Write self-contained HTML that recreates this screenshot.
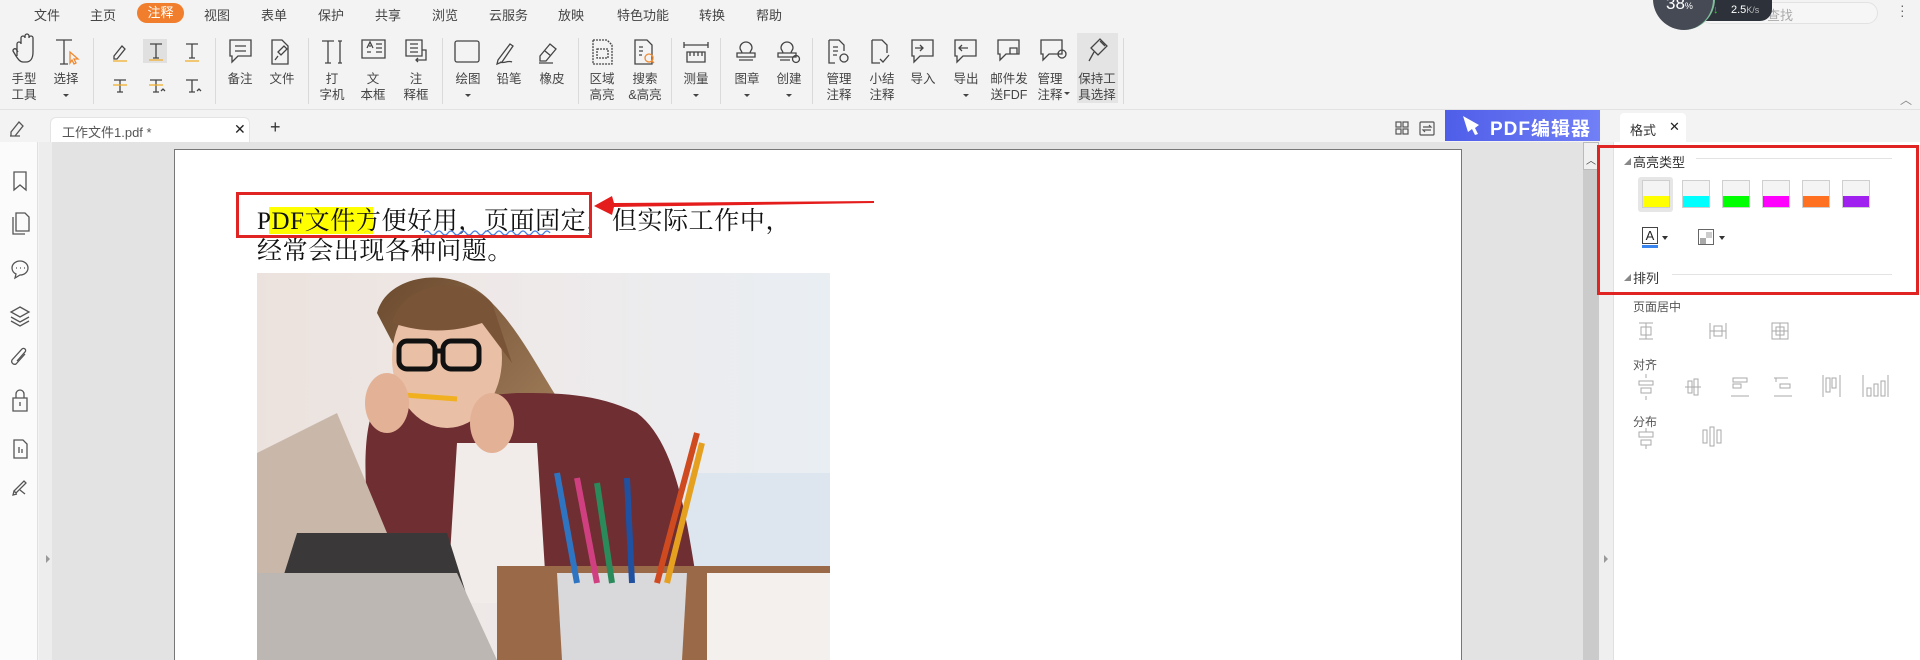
<!DOCTYPE html>
<html><head><meta charset="utf-8"><style>
*{margin:0;padding:0;box-sizing:border-box}
body{width:1920px;height:660px;overflow:hidden;background:#f3f3f3;font-family:"Liberation Sans","Noto Sans CJK SC",sans-serif;color:#333;position:relative}
.a{position:absolute}
.m{position:absolute;top:5px;font-size:13px;color:#444}
.lb{position:absolute;font-size:12.5px;color:#444;text-align:center;width:60px;line-height:16px}
.sw{position:absolute;top:180px;width:28px;height:28px;border:1px solid #cfcfcf;background:#f4f4f4}
.sw i{position:absolute;left:0;right:0;bottom:0;height:11px}
</style></head><body>
<div class="m" style="left:34px">文件</div>
<div class="m" style="left:90px">主页</div>
<div class="a" style="left:137px;top:3px;width:47px;height:20px;border-radius:10px;background:#f07e2c;color:#fff;font-size:13px;text-align:center;line-height:20px">注释</div>
<div class="m" style="left:204px">视图</div>
<div class="m" style="left:261px">表单</div>
<div class="m" style="left:318px">保护</div>
<div class="m" style="left:375px">共享</div>
<div class="m" style="left:432px">浏览</div>
<div class="m" style="left:489px">云服务</div>
<div class="m" style="left:558px">放映</div>
<div class="m" style="left:617px">特色功能</div>
<div class="m" style="left:699px">转换</div>
<div class="m" style="left:756px">帮助</div>
<div class="a" style="left:1700px;top:2px;width:178px;height:22px;border:1px solid #e2e2e2;border-radius:11px;background:#f6f6f6"></div>
<div class="a" style="left:1767px;top:5px;font-size:13px;color:#aaa">查找</div>
<div class="a" style="left:1680px;top:0;width:92px;height:21px;background:#2d3139;border-radius:0 0 12px 0"></div>
<div class="a" style="left:1713px;top:4px;font-size:11px;color:#3c3">↓</div>
<div class="a" style="left:1731px;top:4px;font-size:11px;color:#fff">2.5<span style="font-size:9px;color:#bbb">K/s</span></div>
<div class="a" style="left:1653px;top:-32px;width:62px;height:62px;border-radius:50%;background:#464a55;border-right:2px solid #7fbf9a"></div>
<div class="a" style="left:1666px;top:-6px;font-size:17px;color:#fff">38<span style="font-size:9px">%</span></div>
<div class="a" style="left:1900px;top:3px;font-size:14px;color:#666;line-height:5px">·<br>·<br>·</div>
<div class="a" style="left:1900px;top:91px;font-size:12px;color:#888">︿</div>
<svg class="a" style="left:0;top:0" width="1130" height="110" fill="none" stroke="#444" stroke-width="1.3">
<path d="M17 56v-12a2 2 0 014 0v-6a2 2 0 014 0v-2a2 2 0 014 0v2a2 2 0 014 0v14c0 7-3 10-7 10h-3c-3 0-5-3-7-6l-3-5a2 2 0 013-2l2 3"/>
<path d="M56 40h16M64 40v24M60 64h8"/><path d="M70 52l8 7-4 0 2 4-2 1-2-4-2 3z" stroke="#f08a30"/>
<path d="M114 56l8-10 3 3-8 10h-3z" /><path d="M113 61h14" stroke="#f0b030"/>
<rect x="143" y="39" width="24" height="24" fill="#e0e0e0" stroke="none"/><path d="M150 44h12M156 44v14M153 58h6"/><path d="M149 60h14" stroke="#f0b030"/>
<path d="M186 44h12M192 44v14M189 58h6"/><path d="M185 61h14" stroke="#f0b030"/>
<path d="M114 80h12M120 80v12M117 92h6"/><path d="M113 85h14" stroke="#f0b030"/>
<path d="M150 80h12M156 80v12M153 92h6M161 91l2-2 2 2"/><path d="M149 85h14" stroke="#f0b030"/>
<path d="M186 80h12M192 80v12M189 92h6M197 91l2-2 2 2"/>
<path d="M230 40h21v16h-13l-6 6v-6h-2zM235 46h11M235 51h11"/>
<path d="M272 40h10l6 6v18h-16zM278 52l6-6 3 3-6 6zM278 56l-3 4"/>
<path d="M322 41h12M328 41v22M325 63h6M338 41h4M340 41v22M338 63h4"/>
<path d="M362 40h23v18h-23zM367 48l3-6 3 6M369 46h2M376 44h6M376 48h6M376 52h6M367 52h4"/>
<path d="M406 40h16v16h-16zM410 44h8M410 48h8M410 52h8M422 50h4v10h-10M418 58l-2 2 2 2"/>
<rect x="455" y="41" width="24" height="21" rx="2"/>
<path d="M498 60l12-16 3 2-11 16-5 2zM500 62c4 2 8-2 12 0"/>
<path d="M540 56l10-12 6 5-10 12h-6zM539 63h14M545 51l6 5"/>
<path d="M593 40h14l5 5v19h-19zM597 49h11v9h-11z" stroke-dasharray="2 1"/>
<path d="M635 40h12l5 5v19h-17zM639 47h4M639 51h4M639 55h3"/><circle cx="649" cy="58" r="4" stroke="#f08a30"/><path d="M652 61l2 2" stroke="#f08a30"/>
<path d="M684 42v6M684 45h24M708 42v6M687 52h18v10h-18zM690 52v4M694 52v4M698 52v4M702 52v4"/>
<path d="M740 48a6 6 0 1112 0c0 2-2 3-2 5h-8c0-2-2-3-2-5zM737 53h18v4h-18zM739 60h14"/>
<path d="M781 48a6 6 0 1112 0c0 2-2 3-2 5h-8c0-2-2-3-2-5zM778 53h18v4h-18zM780 60h10"/><circle cx="796" cy="59" r="3.5"/>
<path d="M829 40h10l5 5v6M833 47h5M833 51h5M833 55h4M829 40v23h6"/><circle cx="844" cy="58" r="4"/>
<path d="M872 40h10l5 5v8M872 40v23h8M880 59l3 3 6-7"/>
<path d="M912 40h21v16h-13l-6 6v-6h-2zM915 48h8M920 45l3 3-3 3"/>
<path d="M955 40h21v16h-13l-6 6v-6h-2zM968 48h-9M962 45l-3 3 3 3"/>
<path d="M998 40h21v14h-13l-6 6v-6h-2zM1010 48h7v6h-7z"/>
<path d="M1041 40h21v14h-13l-6 6v-6h-2z"/><circle cx="1062" cy="54" r="4"/>
<rect x="1077" y="33" width="41" height="70" fill="#e4e4e4" stroke="none"/>
<path d="M1091 48l9-9 7 7-9 9zM1094 52l-5 9M1100 41l5 5"/>
<g stroke="#dadada" stroke-width="1"><path d="M93.5 38v66M215.5 38v66M308.5 38v66M442.5 38v66M578.5 38v66M671.5 38v66M720.5 38v66M812.5 38v66M1123.5 38v66"/></g>
<g fill="#444" stroke="none"><path d="M63 94h6l-3 3z"/><path d="M465 94h6l-3 3z"/><path d="M693 94h6l-3 3z"/><path d="M744 94h6l-3 3z"/><path d="M786 94h6l-3 3z"/><path d="M963 94h6l-3 3z"/><path d="M1064 92h6l-3 3z"/></g>
</svg>
<div class="lb" style="left:-6px;top:71px">手型<br>工具</div>
<div class="lb" style="left:36px;top:71px">选择</div>
<div class="lb" style="left:210px;top:71px">备注</div>
<div class="lb" style="left:252px;top:71px">文件</div>
<div class="lb" style="left:302px;top:71px">打<br>字机</div>
<div class="lb" style="left:343px;top:71px">文<br>本框</div>
<div class="lb" style="left:386px;top:71px">注<br>释框</div>
<div class="lb" style="left:438px;top:71px">绘图</div>
<div class="lb" style="left:479px;top:71px">铅笔</div>
<div class="lb" style="left:522px;top:71px">橡皮</div>
<div class="lb" style="left:572px;top:71px">区域<br>高亮</div>
<div class="lb" style="left:615px;top:71px">搜索<br>&amp;高亮</div>
<div class="lb" style="left:666px;top:71px">测量</div>
<div class="lb" style="left:717px;top:71px">图章</div>
<div class="lb" style="left:759px;top:71px">创建</div>
<div class="lb" style="left:809px;top:71px">管理<br>注释</div>
<div class="lb" style="left:852px;top:71px">小结<br>注释</div>
<div class="lb" style="left:893px;top:71px">导入</div>
<div class="lb" style="left:936px;top:71px">导出</div>
<div class="lb" style="left:979px;top:71px">邮件发<br>送FDF</div>
<div class="lb" style="left:1020px;top:71px">管理<br>注释</div>
<div class="lb" style="left:1067px;top:71px">保持工<br>具选择</div>
<div class="a" style="left:0;top:109px;width:1920px;height:1px;background:#e2e2e2"></div>
<svg class="a" style="left:8px;top:119px" width="18" height="18" fill="none" stroke="#555" stroke-width="1.3"><path d="M3 13l8-10 4 4-8 10H3zM2 17h10"/></svg>
<div class="a" style="left:50px;top:117px;width:200px;height:26px;background:#fff;border-radius:6px 6px 0 0;border:1px solid #e4e4e4;border-bottom:none"></div>
<div class="a" style="left:62px;top:122px;font-size:13px;color:#555">工作文件1.pdf *</div>
<div class="a" style="left:234px;top:121px;font-size:14px;color:#222">✕</div>
<div class="a" style="left:270px;top:117px;font-size:18px;color:#333">+</div>
<svg class="a" style="left:1395px;top:120px" width="50" height="18" fill="none" stroke="#555" stroke-width="1.2"><rect x="1" y="2" width="5" height="5"/><rect x="8" y="2" width="5" height="5"/><rect x="1" y="9" width="5" height="5"/><rect x="8" y="9" width="5" height="5"/><rect x="25" y="2" width="14" height="13" rx="1"/><path d="M28 7h8l-2-2M36 10h-8l2 2"/></svg>
<div class="a" style="left:1445px;top:110px;width:155px;height:31px;background:linear-gradient(90deg,#4f5ee8,#7180f6)"></div>
<svg class="a" style="left:1460px;top:113px" width="26" height="26"><path d="M3 3l16 9-4 3 3 6-3 1-3-6-4 3z" fill="#fff"/></svg>
<div class="a" style="left:1490px;top:114px;font-size:19px;color:#fff;letter-spacing:1px;font-weight:bold">PDF编辑器</div>
<div class="a" style="left:1620px;top:113px;width:66px;height:29px;background:#fff;border-radius:4px 4px 0 0"></div>
<div class="a" style="left:1630px;top:120px;font-size:13px;color:#333">格式</div>
<div class="a" style="left:1669px;top:119px;font-size:13px;color:#222">✕</div>
<div class="a" style="left:0;top:142px;width:38px;height:518px;background:#fbfbfb;border-right:1px solid #e0e0e0"></div>
<div class="a" style="left:39px;top:142px;width:13px;height:518px;background:#ededed"></div>
<div class="a" style="left:52px;top:142px;width:1531px;height:518px;background:#e3e3e3"></div>
<svg class="a" style="left:0;top:142px" width="52" height="518" fill="none" stroke="#555" stroke-width="1.3">
<path d="M14 30h12v18l-6-5-6 5z"/>
<path d="M16 71h9l4 4v14h-13zM13 75v17h12"/>
<path d="M12 126a8 7 0 1116 0 8 7 0 01-8 7l-5 3 1-4a7 7 0 01-4-6zM16 126h1M20 126h1M24 126h1"/>
<path d="M20 165l9 5-9 5-9-5zM11 175l9 5 9-5M11 179l9 5 9-5"/>
<path d="M25 212l-9 10a3 3 0 01-4-4l10-11a2 2 0 013 3l-8 9"/>
<path d="M13 256h14v13h-14zM16 256v-4a4 4 0 018 0v4M20 260v4"/>
<path d="M14 298h9l4 4v14h-13zM19 311v-6M22 311v-4"/>
<path d="M14 349l10-10 2 2-10 10zM14 349l-1 4 4-1M20 348l5 4"/>
<path d="M46 413l4 4-4 4z" fill="#999" stroke="none"/>
</svg>
<div class="a" style="left:174px;top:149px;width:1288px;height:511px;background:#fff;border:1px solid #777;border-bottom:none"></div>
<div class="a" style="left:269px;top:207px;width:104px;height:27px;background:#ffff00"></div>
<div class="a" style="left:257px;top:207px;font-family:'Liberation Serif','Noto Serif CJK SC',serif;font-size:25px;line-height:30px;color:#111;letter-spacing:0.6px;white-space:nowrap">PDF文件方便好用，页面固定，但实际工作中，<br>经常会出现各种问题。</div>
<svg class="a" style="left:424px;top:229px" width="130" height="8"><path d="M0 4q3-4 6 0t6 0 6 0 6 0 6 0 6 0 6 0 6 0 6 0 6 0 6 0 6 0 6 0 6 0 6 0 6 0 6 0 6 0 6 0 6 0 6 0" fill="none" stroke="#4a7fe0" stroke-width="1.3"/></svg>
<div class="a" style="left:236px;top:192px;width:356px;height:46px;border:3px solid #e02424"></div>
<svg class="a" style="left:592px;top:192px" width="285" height="28"><path d="M2 14l18-10 2 7 260-2v2l-260 4-2 8z" fill="#e51c1c"/></svg>
<svg class="a" style="left:257px;top:273px" width="573" height="387">
<defs><linearGradient id="bg" x1="0" x2="1"><stop offset="0" stop-color="#ece2dd"/><stop offset=".5" stop-color="#eeeaea"/><stop offset="1" stop-color="#e9eef3"/></linearGradient>
<linearGradient id="hair" x1="0" x2="1" y1="0" y2="1"><stop offset="0" stop-color="#6b4a2e"/><stop offset="1" stop-color="#c8a27a"/></linearGradient></defs>
<rect width="573" height="387" fill="url(#bg)"/>
<rect x="430" y="200" width="143" height="120" fill="#dde5ee"/>
<path d="M120 40c10-40 80-50 115-10 40 40 60 100 100 140 40 40 60 80 70 110l-60 20-120-60z" fill="url(#hair)"/>
<path d="M120 130c-20 30-10 120 0 180h320c-10-60-20-140-60-170-40-20-80-20-120-20z" fill="#6e2e32"/>
<path d="M200 170h80l10 160h-100z" fill="#f1ece9"/>
<ellipse cx="190" cy="85" rx="55" ry="70" fill="#e9bfa6"/>
<path d="M135 50c10-40 70-50 100-20l20 60-30-40c-30 10-60 10-90 0z" fill="#7a5436"/>
<g fill="none" stroke="#111" stroke-width="5"><rect x="142" y="68" width="36" height="28" rx="8"/><rect x="186" y="68" width="36" height="28" rx="8"/><path d="M178 78h8"/></g>
<path d="M120 120l80 6" stroke="#f0b020" stroke-width="5"/>
<ellipse cx="130" cy="130" rx="22" ry="30" fill="#e3b196"/><ellipse cx="235" cy="150" rx="22" ry="30" fill="#e3b196"/>
<path d="M0 180l80-40 100 240h-180z" fill="#c9b8aa"/>
<path d="M40 260l150 0 40 127h-230z" fill="#3a3838"/>
<path d="M0 300h200l40 87h-240z" fill="#bdb7b3"/>
<rect x="240" y="293" width="333" height="94" fill="#9a6a48"/>
<rect x="450" y="300" width="123" height="87" fill="#f3f0ee"/>
<path d="M300 300h130l-5 87h-120z" fill="#d9d9dc"/>
<g stroke-width="6"><path d="M320 310l-20-110" stroke="#2f74c0"/><path d="M340 310l-20-105" stroke="#d04080"/><path d="M355 310l-15-100" stroke="#2a8a5a"/><path d="M375 310l-5-105" stroke="#2050a0"/><path d="M400 310l40-150" stroke="#d04a20"/><path d="M410 310l35-140" stroke="#e6a020"/></g>
</svg>
<div class="a" style="left:1583px;top:142px;width:16px;height:518px;background:#cbcbcb"></div>
<div class="a" style="left:1583px;top:142px;width:16px;height:28px;background:#f0f0f0;border:1px solid #bbb"></div>
<div class="a" style="left:1586px;top:152px;font-size:10px;color:#444">︿</div>
<div class="a" style="left:1599px;top:142px;width:15px;height:518px;background:#efefef;border-right:1px solid #e0e0e0"></div>
<div class="a" style="left:1614px;top:142px;width:306px;height:518px;background:#fff"></div>
<div class="a" style="left:1604px;top:555px;width:0;height:0;border-left:4px solid #999;border-top:4px solid transparent;border-bottom:4px solid transparent"></div>
<div class="a" style="left:1597px;top:145px;width:322px;height:150px;border:3px solid #e02424"></div>
<div class="a" style="left:1624px;top:157px;font-size:7px;color:#888">◢</div>
<div class="a" style="left:1633px;top:152px;font-size:13px;color:#333">高亮类型</div>
<div class="a" style="left:1696px;top:158px;width:196px;height:1px;background:#e3e3e3"></div>
<div class="a" style="left:1638px;top:177px;width:35px;height:35px;background:#e6e6e6;border-radius:3px"></div>
<div class="sw" style="left:1642px"><i style="background:#ffff00"></i></div>
<div class="sw" style="left:1682px"><i style="background:#00ffff"></i></div>
<div class="sw" style="left:1722px"><i style="background:#00ff00"></i></div>
<div class="sw" style="left:1762px"><i style="background:#ff00ff"></i></div>
<div class="sw" style="left:1802px"><i style="background:#ff7020"></i></div>
<div class="sw" style="left:1842px"><i style="background:#a020f0"></i></div>
<div class="a" style="left:1642px;top:227px;width:16px;height:17px;border:1px solid #444;font-size:13px;text-align:center;line-height:15px;color:#222">A</div>
<div class="a" style="left:1642px;top:245px;width:16px;height:3px;background:#3a86f0"></div>
<div class="a" style="left:1662px;top:236px;border-top:4px solid #333;border-left:3px solid transparent;border-right:3px solid transparent"></div>
<div class="a" style="left:1698px;top:229px;width:16px;height:16px;border:1px solid #666"><i class="a" style="left:1px;top:8px;width:6px;height:6px;background:#aaa"></i><i class="a" style="left:7px;top:2px;width:6px;height:6px;background:#ccc"></i></div>
<div class="a" style="left:1719px;top:236px;border-top:4px solid #333;border-left:3px solid transparent;border-right:3px solid transparent"></div>
<div class="a" style="left:1624px;top:273px;font-size:7px;color:#888">◢</div>
<div class="a" style="left:1633px;top:268px;font-size:13px;color:#333">排列</div>
<div class="a" style="left:1672px;top:274px;width:220px;height:1px;background:#e3e3e3"></div>
<div class="a" style="left:1633px;top:298px;font-size:12px;color:#555">页面居中</div>
<div class="a" style="left:1633px;top:356px;font-size:12px;color:#555">对齐</div>
<div class="a" style="left:1633px;top:413px;font-size:12px;color:#555">分布</div>
<svg class="a" style="left:1630px;top:318px" width="260" height="140" fill="none" stroke="#aaa" stroke-width="1">
<path d="M9 5h14M16 5v16M9 21h14M11 9h10v8h-10z"/>
<path d="M80 5v16M96 5v16M80 13h16M84 8h8v10h-8z"/>
<path d="M142 5h16v16h-16zM146 9h8v8h-8zM150 5v16M142 13h16"/>
<path d="M16 60v-4M16 78v4M9 63h14v4h-14zM11 70h10v5h-10z"/>
<path d="M55 69h16M58 63h4v12h-4zM64 61h4v16h-4z"/>
<path d="M103 60h14v4h-14zM103 66h8v4h-8zM101 78h18"/>
<path d="M158 60h-14M160 66h-10v4h10zM146 60v4M144 78h18"/>
<path d="M193 57v22M196 60h4v14h-4zM202 60h4v10h-4zM210 57v22"/>
<path d="M233 57v22M258 57v22M237 70h4v8h-4zM244 66h4v12h-4zM251 63h4v15h-4z"/>
<path d="M9 114h14v5h-14zM11 122h10v5h-10zM16 110v4M16 127v4"/>
<path d="M73 112h4v13h-4zM80 109h4v19h-4zM87 112h4v13h-4z"/>
</svg>
</body></html>
